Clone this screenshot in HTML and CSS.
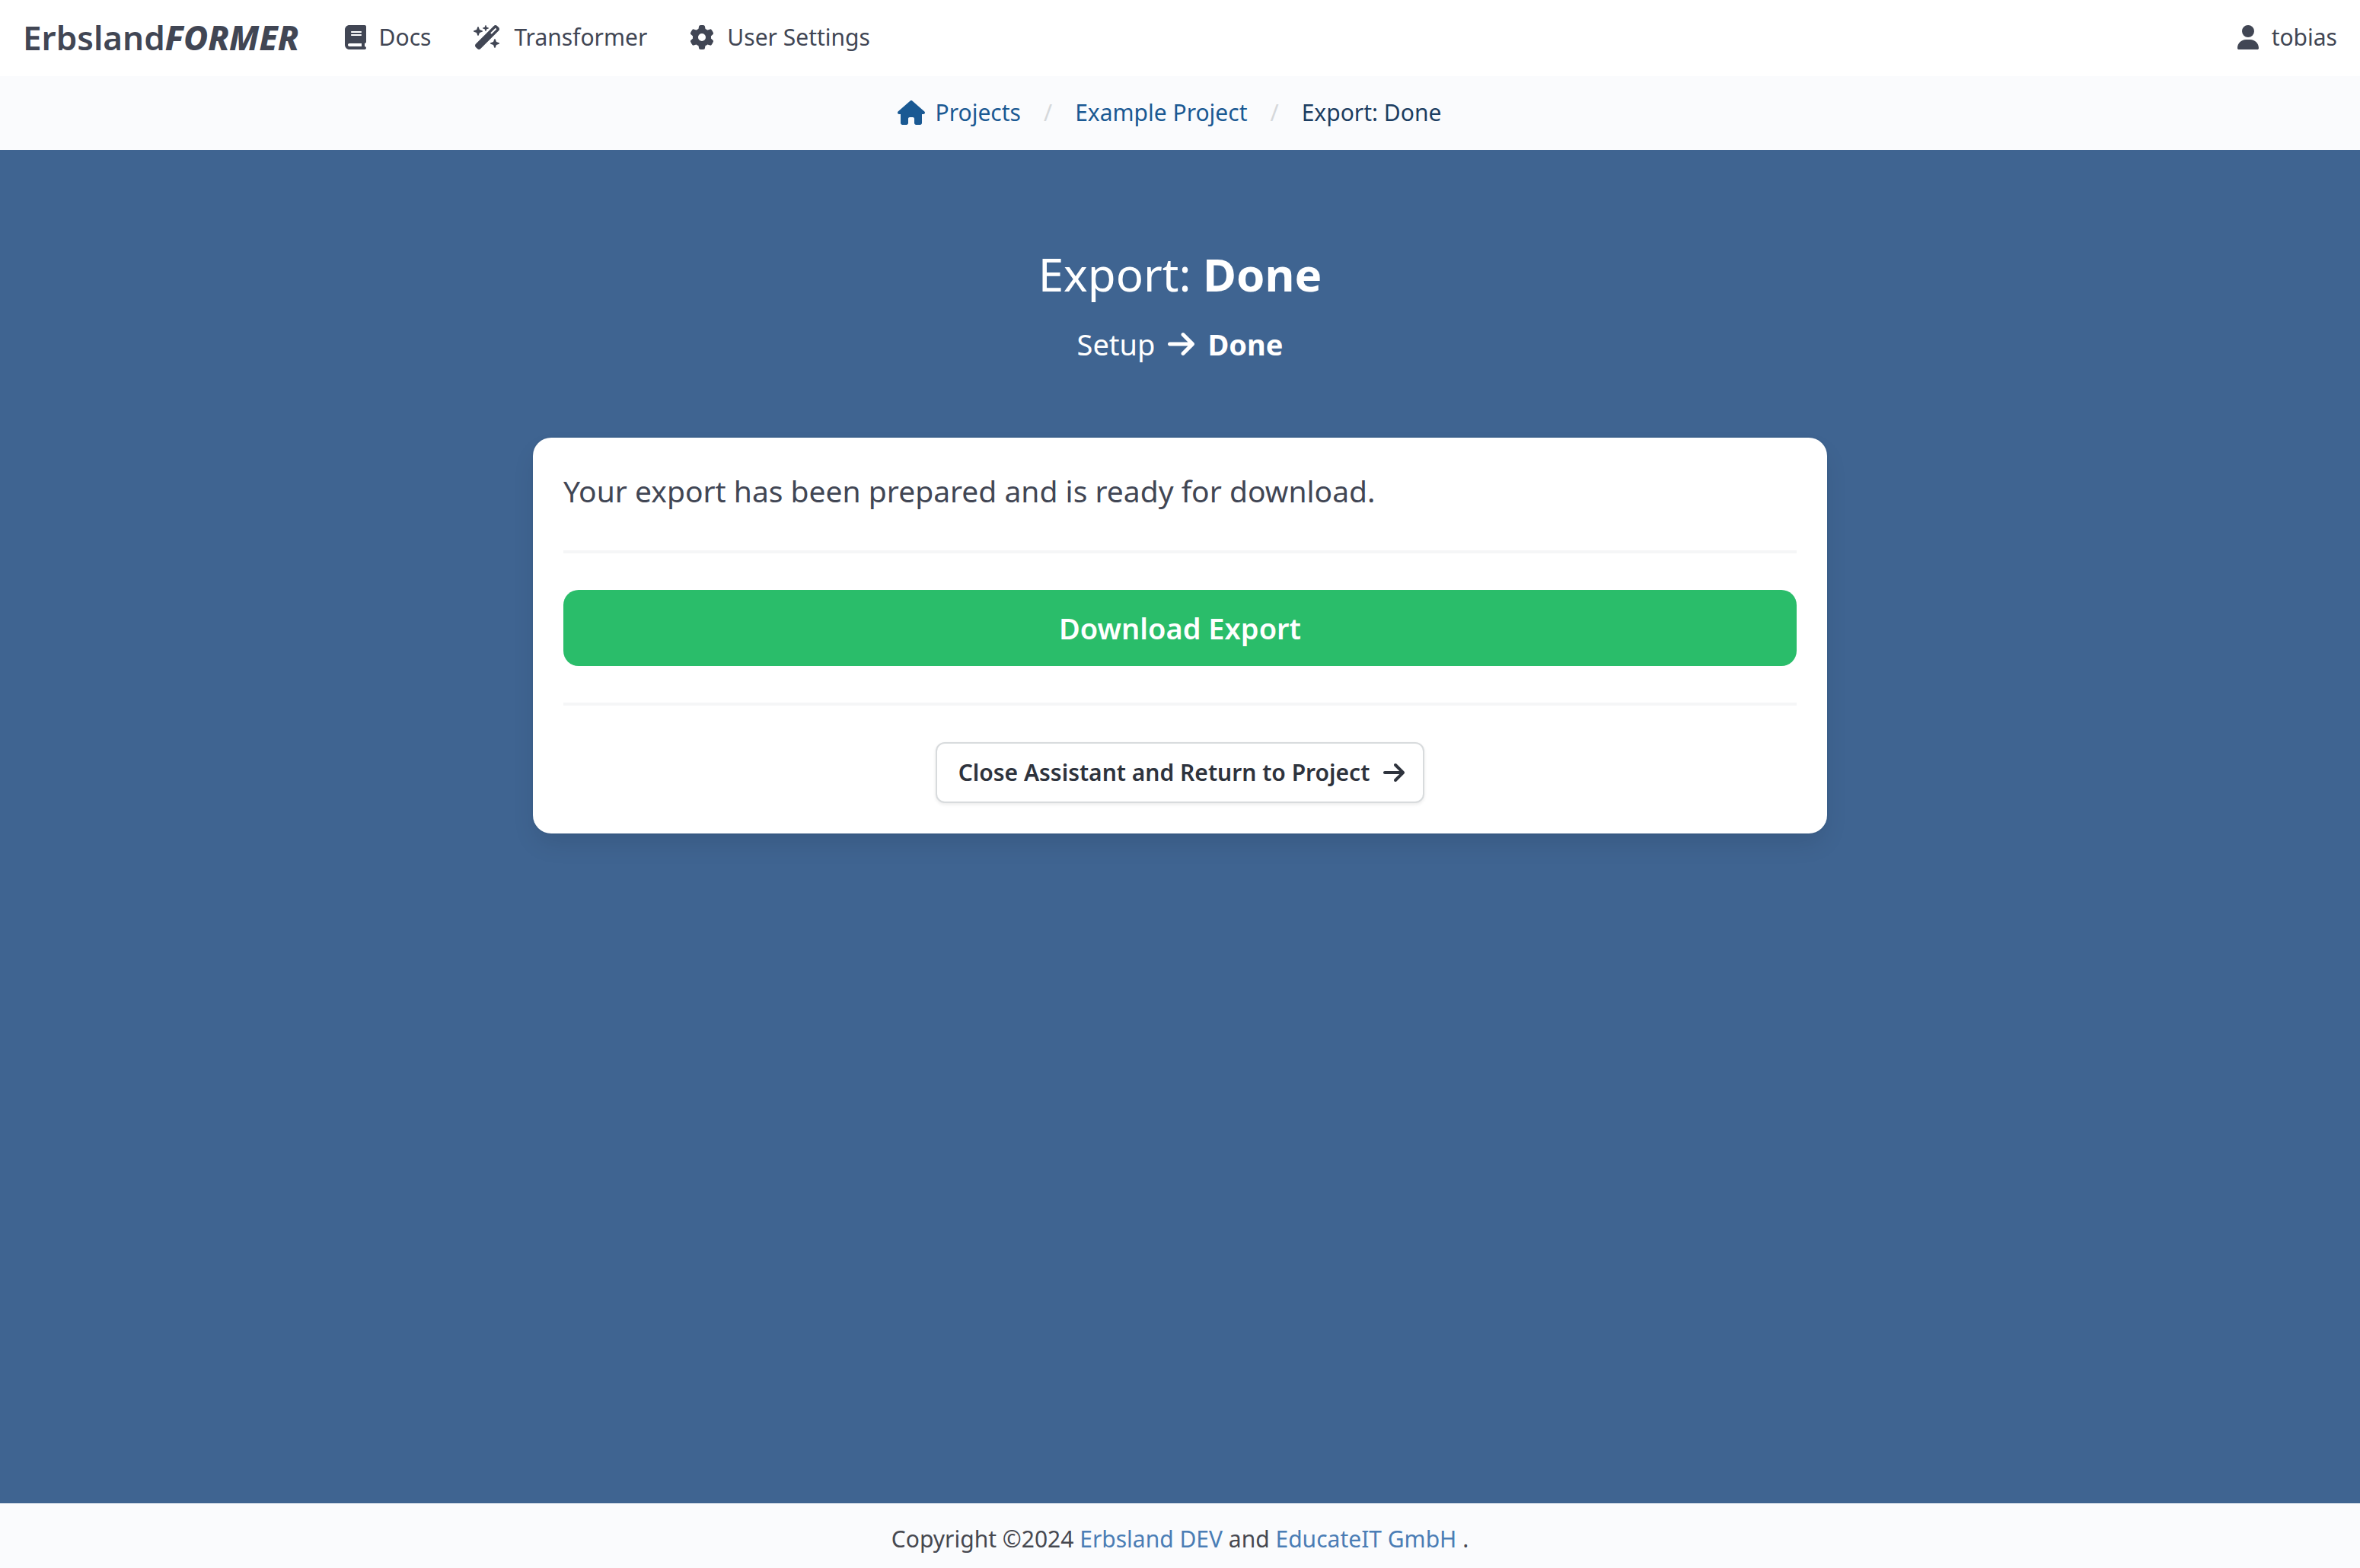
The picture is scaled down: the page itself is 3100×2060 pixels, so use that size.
FILE: index.html
```html
<!DOCTYPE html>
<html lang="en">
<head>
  <meta charset="utf-8">
  <meta name="viewport" content="width=device-width, initial-scale=1">
  <title>Export: Done – ErbslandFORMER</title>
  <link rel="stylesheet" href="styles.css">
</head>
<body>
  <header class="navbar">
    <a class="brand" href="#">Erbsland<em class="brand-accent">FORMER</em></a>
    <nav class="navbar-menu" aria-label="Main">
      <a class="navbar-item" href="#">
        <svg class="icon icon-narrow" viewBox="0 0 448 512" aria-hidden="true"><path d="M96 0C43 0 0 43 0 96V416c0 53 43 96 96 96H384h32c17.700 0 32-14.300 32-32s-14.300-32-32-32V384c17.700 0 32-14.300 32-32V32c0-17.700-14.300-32-32-32H384 96zm0 384H352v64H96c-17.700 0-32-14.300-32-32s14.300-32 32-32zm32-240c0-8.800 7.200-16 16-16H336c8.800 0 16 7.200 16 16s-7.200 16-16 16H144c-8.800 0-16-7.200-16-16zm16 48H336c8.800 0 16 7.200 16 16s-7.200 16-16 16H144c-8.800 0-16-7.200-16-16s7.200-16 16-16z"/></svg>
        <span>Docs</span>
      </a>
      <a class="navbar-item" href="#">
        <svg class="icon icon-wide" viewBox="0 0 576 512" aria-hidden="true"><path d="M234.700 42.700L197 56.800c-3 1.100-5 4-5 7.200s2 6.100 5 7.200l37.700 14.100L248.800 123c1.100 3 4 5 7.200 5s6.100-2 7.200-5l14.100-37.700L315 71.200c3-1.100 5-4 5-7.200s-2-6.100-5-7.200L277.300 42.700 263.200 5c-1.100-3-4-5-7.200-5s-6.100 2-7.200 5L234.700 42.700zM46.100 395.400c-18.700 18.700-18.700 49.100 0 67.900l34.600 34.600c18.700 18.700 49.100 18.700 67.900 0L529.900 116.500c18.700-18.700 18.700-49.100 0-67.900L495.300 14.100c-18.700-18.700-49.100-18.700-67.900 0L46.100 395.400zM484.600 82.600l-105 105-23.300-23.300 105-105 23.300 23.300zM7.500 117.200C3 118.900 0 123.200 0 128s3 9.100 7.500 10.800L64 160l21.200 56.500c1.700 4.500 6 7.500 10.800 7.500s9.100-3 10.800-7.500L128 160l56.500-21.200c4.500-1.700 7.500-6 7.500-10.800s-3-9.100-7.500-10.800L128 96 106.800 39.500C105.100 35 100.800 32 96 32s-9.100 3-10.800 7.500L64 96 7.500 117.200zm352 256c-4.500 1.700-7.500 6-7.500 10.800s3 9.100 7.500 10.800L416 416l21.200 56.500c1.700 4.500 6 7.500 10.800 7.500s9.100-3 10.800-7.500L480 416l56.500-21.200c4.500-1.700 7.500-6 7.500-10.800s-3-9.100-7.500-10.800L480 352l-21.200-56.500c-1.700-4.500-6-7.500-10.800-7.500s-9.100 3-10.800 7.500L416 352l-56.500 21.200z"/></svg>
        <span>Transformer</span>
      </a>
      <a class="navbar-item" href="#">
        <svg class="icon" viewBox="0 0 512 512" aria-hidden="true"><path d="M495.900 166.600c3.200 8.700 .5 18.400-6.400 24.600l-43.300 39.400c1.100 8.300 1.700 16.800 1.700 25.400s-.6 17.100-1.700 25.400l43.300 39.400c6.900 6.200 9.600 15.900 6.400 24.600c-4.400 11.900-9.700 23.300-15.800 34.300l-4.700 8.100c-6.600 11-14 21.400-22.100 31.200c-5.900 7.200-15.700 9.600-24.500 6.800l-55.700-17.700c-13.400 10.300-28.200 18.900-44 25.400l-12.500 57.100c-2 9.100-9 16.300-18.200 17.800c-13.800 2.300-28 3.500-42.500 3.500s-28.700-1.200-42.500-3.500c-9.200-1.500-16.200-8.700-18.200-17.800l-12.500-57.100c-15.800-6.500-30.600-15.100-44-25.400L83.100 425.900c-8.800 2.800-18.600 .3-24.500-6.800c-8.100-9.800-15.500-20.200-22.100-31.200l-4.700-8.100c-6.100-11-11.400-22.400-15.800-34.300c-3.200-8.700-.5-18.400 6.400-24.600l43.300-39.400C64.600 273.100 64 264.600 64 256s.6-17.100 1.700-25.400L22.400 191.200c-6.900-6.200-9.600-15.900-6.400-24.600c4.400-11.900 9.700-23.300 15.800-34.300l4.700-8.100c6.600-11 14-21.400 22.100-31.200c5.900-7.200 15.700-9.600 24.500-6.800l55.700 17.700c13.400-10.300 28.200-18.900 44-25.400l12.500-57.100c2-9.100 9-16.300 18.200-17.800C227.300 1.200 241.500 0 256 0s28.700 1.200 42.500 3.500c9.200 1.500 16.200 8.700 18.200 17.800l12.500 57.100c15.800 6.500 30.600 15.100 44 25.400l55.700-17.700c8.800-2.800 18.600-.3 24.500 6.800c8.100 9.800 15.500 20.200 22.100 31.200l4.700 8.100c6.100 11 11.400 22.400 15.800 34.300zM256 336a80 80 0 1 0 0-160 80 80 0 1 0 0 160z"/></svg>
        <span>User Settings</span>
      </a>
    </nav>
    <a class="navbar-item navbar-user" href="#">
      <svg class="icon icon-narrow" viewBox="0 0 448 512" aria-hidden="true"><path d="M224 256A128 128 0 1 0 224 0a128 128 0 1 0 0 256zm-45.700 48C79.800 304 0 383.800 0 482.300C0 498.700 13.300 512 29.700 512H418.300c16.400 0 29.700-13.300 29.700-29.700C448 383.800 368.200 304 269.700 304H178.300z"/></svg>
      <span>tobias</span>
    </a>
  </header>

  <nav class="breadcrumb" aria-label="Breadcrumb">
    <ol class="breadcrumb-list">
      <li class="breadcrumb-item">
        <a class="breadcrumb-link" href="#">
          <svg class="icon icon-wide" viewBox="0 0 576 512" aria-hidden="true"><path d="M575.800 255.500c0 18-15 32.100-32 32.100h-32l.7 160.200c0 2.700-.2 5.400-.5 8.100V472c0 22.100-17.900 40-40 40H456c-1.100 0-2.200 0-3.300-.1c-1.400 .1-2.800 .1-4.200 .1H416 392c-22.100 0-40-17.900-40-40V448 384c0-17.700-14.300-32-32-32H256c-17.700 0-32 14.300-32 32v64 24c0 22.100-17.900 40-40 40H160 128.100c-1.500 0-3-.1-4.500-.2c-1.200 .1-2.400 .2-3.600 .2H104c-22.100 0-40-17.900-40-40V360c0-.9 0-1.900 .1-2.800V287.600H32c-18 0-32-14-32-32.100c0-9 3-17 10-24L266.400 8c7-7 15-8 22-8s15 2 21 7L564.800 231.500c8 7 12 15 11 24z"/></svg>
          <span>Projects</span>
        </a>
      </li>
      <li class="breadcrumb-item"><a class="breadcrumb-link" href="#">Example Project</a></li>
      <li class="breadcrumb-item"><a class="breadcrumb-link is-active" href="#" aria-current="page">Export: Done</a></li>
    </ol>
  </nav>

  <main class="assistant">
    <h1 class="title">Export: <strong>Done</strong></h1>
    <p class="steps">
      <span>Setup</span>
      <svg class="icon icon-step" viewBox="0 0 448 512" aria-hidden="true"><path d="M438.600 278.600c12.500-12.500 12.500-32.800 0-45.300l-160-160c-12.500-12.500-32.800-12.500-45.300 0s-12.500 32.800 0 45.300L338.800 224 32 224c-17.700 0-32 14.300-32 32s14.300 32 32 32l306.700 0L233.400 393.400c-12.500 12.500-12.500 32.800 0 45.300s32.800 12.500 45.300 0l160-160z"/></svg>
      <strong>Done</strong>
    </p>

    <section class="card">
      <p class="message">Your export has been prepared and is ready for download.</p>
      <hr class="divider">
      <button class="button button-download" type="button">Download Export</button>
      <hr class="divider">
      <button class="button button-close" type="button">
        <span>Close Assistant and Return to Project</span>
        <svg class="icon icon-narrow" viewBox="0 0 448 512" aria-hidden="true"><path d="M438.600 278.600c12.500-12.500 12.500-32.800 0-45.300l-160-160c-12.500-12.500-32.800-12.500-45.300 0s-12.500 32.800 0 45.300L338.800 224 32 224c-17.700 0-32 14.300-32 32s14.300 32 32 32l306.700 0L233.400 393.400c-12.500 12.500-12.500 32.800 0 45.300s32.800 12.500 45.300 0l160-160z"/></svg>
      </button>
    </section>
  </main>

  <footer class="footer">
    Copyright ©2024 <a class="footer-link" href="#">Erbsland DEV</a> and <a class="footer-link" href="#">EducateIT GmbH</a> .
  </footer>
</body>
</html>
```
FILE: styles.css
```css
*,
*::before,
*::after {
  box-sizing: border-box;
}

body {
  display: flex;
  flex-direction: column;
  min-height: 100vh;
  margin: 0;
  background: #3f6491;
  color: #414654;
  font-family: "Noto Sans", "Open Sans", sans-serif;
  font-size: 30px;
  line-height: 44px;
}

a {
  color: inherit;
  text-decoration: none;
}

strong {
  font-weight: 700;
}

/* Icons */
.icon {
  flex: none;
  width: 32px;
  height: 32px;
  fill: currentColor;
}

.icon-narrow {
  width: 28px;
}

.icon-wide {
  width: 36px;
}

.icon-step {
  width: 35px;
  height: 40px;
}

/* Top bar */
.navbar {
  display: flex;
  align-items: center;
  gap: 60px;
  padding: 25px 30px 27px;
  background: #fff;
}

.brand {
  font-size: 44px;
  line-height: 48px;
  font-weight: 600;
}

.brand-accent {
  font-style: italic;
  font-weight: 800;
}

.navbar-menu {
  display: flex;
  gap: 56px;
}

.navbar-item {
  display: flex;
  align-items: center;
  gap: 17px;
}

.navbar-user {
  margin-left: auto;
}

/* Breadcrumb */
.breadcrumb {
  padding: 26px 28px 27px 0;
  background: #fafbfd;
}

.breadcrumb-list {
  display: flex;
  justify-content: center;
  margin: 0;
  padding: 0;
  list-style: none;
}

.breadcrumb-item {
  display: flex;
}

.breadcrumb-item + .breadcrumb-item::before {
  content: "/";
  padding: 0 30px;
  color: #d5d8db;
}

.breadcrumb-link {
  display: flex;
  align-items: center;
  gap: 14px;
  color: #1a5993;
}

.breadcrumb-link.is-active {
  color: #1c3d61;
}

/* Assistant page */
.assistant {
  flex: 1;
  display: flex;
  flex-direction: column;
  align-items: center;
  padding: 123px 40px 96px;
}

.title {
  margin: 0 0 22px;
  color: #fff;
  font-size: 60px;
  line-height: 80px;
  font-weight: 400;
}

.steps {
  display: flex;
  align-items: center;
  gap: 17px;
  margin: 0 0 93px;
  color: #fff;
  font-size: 38px;
  line-height: 60px;
}

.card {
  display: flex;
  flex-direction: column;
  width: 100%;
  max-width: 1700px;
  padding: 40px;
  border-radius: 24px;
  background: #fff;
  box-shadow: 0 16px 32px -4px rgba(10, 10, 10, 0.1), 0 0 0 2px rgba(10, 10, 10, 0.02);
}

.message {
  margin: 0;
  font-size: 39px;
  line-height: 60px;
}

.divider {
  width: 100%;
  height: 4px;
  margin: 48px 0;
  border: 0;
  background: #f5f6f7;
}

.button {
  display: flex;
  align-items: center;
  justify-content: center;
  gap: 18px;
  margin: 0;
  border: 0;
  font-family: inherit;
  font-weight: 600;
  cursor: pointer;
}

.button-download {
  padding: 20px 32px;
  border-radius: 20px;
  background: #2abd6a;
  color: #fff;
  font-size: 38px;
  line-height: 60px;
}

.button-close {
  align-self: center;
  padding: 16px 24px 16px 28px;
  border: 2px solid #d8dbdd;
  border-radius: 12px;
  background: #fff;
  box-shadow: 0 2px 4px rgba(10, 10, 10, 0.08);
  color: #2e333d;
  font-size: 30px;
  line-height: 44px;
}

/* Footer */
.footer {
  padding: 25px 40px 16px;
  background: #fafbfd;
  color: #464850;
  text-align: center;
}

.footer-link {
  color: #4a7db5;
}
```
